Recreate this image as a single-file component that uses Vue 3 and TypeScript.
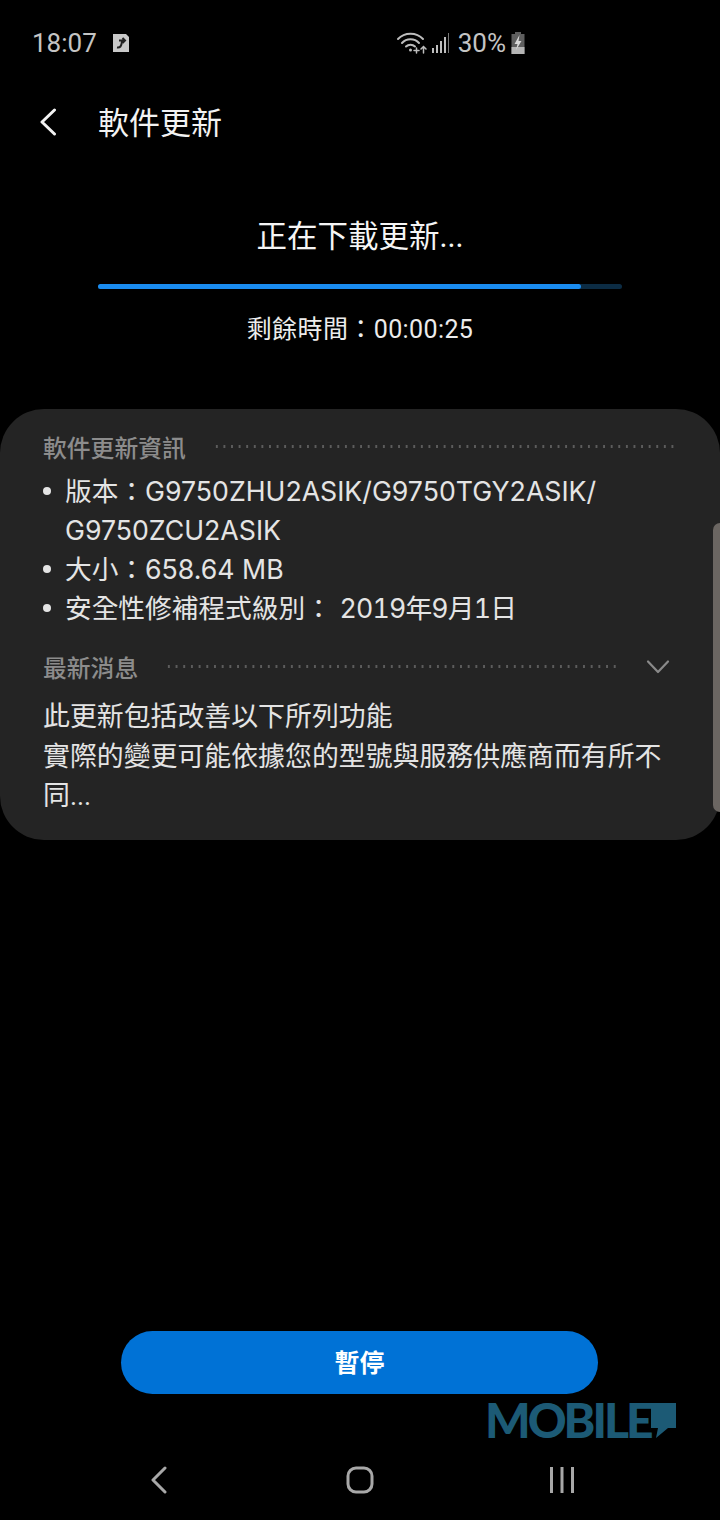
<template>
  <div class="screen">
    <!-- status bar -->
    <div class="status-bar">
      <div class="status-left">
        <span class="time">18:07</span>
        <svg class="note-icon" width="18" height="20" viewBox="0 0 18 20">
          <path d="M1 1h13l3 3v15H1z" fill="#c9c9c9" />
          <path d="M5 14.5c3 .5 4.5-1 5-6.5M7 7.5h5.5M10.5 5l2.5 2.5L10.5 10" fill="none" stroke="#222" stroke-width="2" />
        </svg>
      </div>
      <div class="status-right">
        <svg class="wifi" width="31" height="24" viewBox="0 0 30 24" fill="none" stroke="#bdbdbd" stroke-linecap="round">
          <path d="M1.5 8C8 1 20 1 26.5 8" stroke-width="2" />
          <path d="M5.5 12c4.500-5 12.500-5 17 0" stroke-width="2" />
          <path d="M9.500 15.500c2.500-2.500 6.500-2.500 9 0" stroke-width="2" />
          <circle cx="14" cy="19" r="1.500" fill="#bdbdbd" stroke="none" />
          <path d="M20 17v5M17.500 19.500h5M27 22v-6M24.500 18l2.500-2.500 2.500 2.500" stroke-width="1.500" />
        </svg>
        <svg class="signal" width="18" height="22" viewBox="0 0 18 22" fill="#bdbdbd">
          <rect x="0" y="16" width="2" height="5" />
          <rect x="4" y="13" width="2" height="8" />
          <rect x="8" y="9" width="2" height="12" />
          <rect x="12" y="5" width="2" height="16" />
          <rect x="16" y="1" width="1" height="20" fill="#777" />
        </svg>
        <span class="battery-text">30%</span>
        <svg width="16" height="22" viewBox="0 0 15 22">
          <path d="M4.500 0h6v2H14v20H1V2h3.500z" fill="#5e5e5e" />
          <path d="M1 15h13v7H1z" fill="#b5b5b5" />
          <path d="M9 3 4 12h3l-1.500 6L11 9H8z" fill="#d8d8d8" />
        </svg>
      </div>
    </div>

    <!-- header -->
    <header class="header">
      <svg width="18" height="28" viewBox="0 0 18 28" fill="none" stroke="#f2f2f2" stroke-width="3" stroke-linecap="round" stroke-linejoin="round">
        <path d="M15.500 2 3 14l12.500 12" />
      </svg>
      <h1 class="title">軟件更新</h1>
    </header>

    <!-- download progress -->
    <section class="progress-area">
      <div class="progress-title">正在下載更新...</div>
      <div class="progress-track">
        <div class="progress-fill" :style="{ width: progress + '%' }"></div>
      </div>
      <div class="remaining">剩餘時間：00:00:25</div>
    </section>

    <!-- info card -->
    <section class="card">
      <div class="section-head">
        <span class="section-label">軟件更新資訊</span>
        <span class="dots"></span>
      </div>
      <ul class="info-list">
        <li v-for="item in infoItems" :key="item.label">
          {{ item.label }}<span :class="{ date: item.isDate }">{{ item.value }}</span>
        </li>
      </ul>
      <div class="section-head news-head">
        <span class="section-label">最新消息</span>
        <span class="dots"></span>
        <svg class="chevron" width="24" height="16" viewBox="0 0 24 16" fill="none" stroke="#8a8a8a" stroke-width="2.200" stroke-linecap="round" stroke-linejoin="round">
          <path d="M2 2.500 12 13 22 2.500" />
        </svg>
      </div>
      <p class="news-text">此更新包括改善以下所列功能<br />實際的變更可能依據您的型號與服務供應商而有所不同...</p>
      <div class="scrollbar"></div>
    </section>

    <div class="spacer"></div>

    <!-- action -->
    <div class="action-row">
      <button class="pause-btn"><span>暫停</span></button>
    </div>

    <!-- watermark -->
    <div class="watermark">
      <span class="watermark-text">MOBILE</span>
      <svg width="26" height="42" viewBox="0 0 26 42" fill="#1c5a75">
        <path d="M0 3h25v25h-8L5 38l2-10H0z" />
      </svg>
    </div>

    <!-- navigation bar -->
    <nav class="nav-bar">
      <svg width="18" height="28" viewBox="0 0 18 28" fill="none" stroke="#a8a8a8" stroke-width="3" stroke-linecap="round" stroke-linejoin="round">
        <path d="M15 2 3 14l12 12" />
      </svg>
      <svg width="28" height="28" viewBox="0 0 28 28" fill="none" stroke="#a8a8a8" stroke-width="3">
        <rect x="2" y="2" width="24" height="24" rx="8" />
      </svg>
      <svg width="26" height="28" viewBox="0 0 26 28" fill="#a8a8a8">
        <rect x="1" y="1" width="3" height="26" />
        <rect x="11.500" y="1" width="3" height="26" />
        <rect x="22" y="1" width="3" height="26" />
      </svg>
    </nav>
  </div>
</template>

<script setup lang="ts">
const progress = 92.2

const infoItems: { label: string; value: string; isDate?: boolean }[] = [
  { label: '版本：', value: 'G9750ZHU2ASIK/G9750TGY2ASIK/ G9750ZCU2ASIK' },
  { label: '大小：', value: '658.64 MB' },
  { label: '安全性修補程式級別： ', value: '2019年9月1日', isDate: true },
]
</script>

<style>
html,
body {
  margin: 0;
  background: #000;
}
</style>

<style scoped>
.screen {
  width: 720px;
  height: 1520px;
  background: #000;
  position: relative;
  display: flex;
  flex-direction: column;
  overflow: hidden;
  font-family: Roboto, "Noto Sans CJK TC", sans-serif;
  color: #e8e8e8;
}

.status-bar {
  height: 88px;
  flex: none;
  box-sizing: border-box;
  padding: 0 194px 2px 32px;
  display: flex;
  align-items: center;
  justify-content: space-between;
}

.status-left,
.status-right {
  display: flex;
  align-items: center;
}

.time {
  font-size: 26px;
  color: #c4c4c4;
  margin-right: 15px;
}

.status-right {
  gap: 4px;
}

.wifi {
  margin-right: 1px;
}

.battery-text {
  font-size: 26px;
  color: #c4c4c4;
  margin-left: 4px;
}

.header {
  height: 68px;
  flex: none;
  box-sizing: border-box;
  padding-left: 39px;
  display: flex;
  align-items: center;
  gap: 41px;
}

.title {
  margin: 0;
  padding-bottom: 4px;
  font-size: 31px;
  font-weight: 400;
  color: #f2f2f2;
}

.progress-area {
  flex: none;
  padding-top: 56px;
  display: flex;
  flex-direction: column;
  align-items: center;
}

.progress-title {
  font-size: 30.500px;
  line-height: 50px;
  color: #f5f5f5;
}

.progress-track {
  width: 524px;
  height: 5px;
  margin: 22px 0 0 0;
  border-radius: 3px;
  background: #0c2c44;
}

.progress-fill {
  height: 100%;
  border-radius: 3px;
  background: #1a8cf0;
}

.remaining {
  font-size: 25px;
  line-height: 40px;
  letter-spacing: 0.4px;
  margin-top: 21px;
  color: #ececec;
}

.card {
  position: relative;
  flex: none;
  margin-top: 59px;
  height: 431px;
  box-sizing: border-box;
  padding: 18px 43px 0;
  border-radius: 44px;
  background: #242424;
}

.section-head {
  height: 38px;
  display: flex;
  align-items: center;
  gap: 27px;
}

.section-label {
  font-size: 23.800px;
  font-weight: 500;
  color: #8c8c8c;
}

.dots {
  flex: 1;
  height: 3px;
  background-image: radial-gradient(circle, #5c5c5c 1.200px, transparent 1.300px);
  background-size: 7.650px 3px;
  background-repeat: round;
}

.info-list {
  margin: 7px 0 0;
  padding: 0 0 0 22px;
  list-style: none;
  font-family: Inter, "Noto Sans CJK TC", sans-serif;
  font-size: 26.700px;
  line-height: 39px;
  color: #e4e4e4;
  width: 560px;
}

.info-list li {
  position: relative;
}

.info-list li::before {
  content: "";
  position: absolute;
  left: -22px;
  top: 15px;
  width: 8px;
  height: 8px;
  border-radius: 50%;
  background: #e4e4e4;
}

.date {
  font-feature-settings: "tnum";
  letter-spacing: -0.8px;
}

.news-head {
  margin-top: 19px;
}

.chevron {
  margin: 1px 7px 0 0;
}

.news-text {
  margin: 13px 0 0;
  font-size: 26.900px;
  line-height: 39.500px;
  color: #e4e4e4;
}

.scrollbar {
  position: absolute;
  right: 0;
  top: 114px;
  width: 7px;
  height: 289px;
  border-radius: 7px 0 0 7px;
  background: #6b6662;
}

.spacer {
  flex: 1;
}

.action-row {
  flex: none;
  display: flex;
  padding-left: 121px;
  margin-bottom: 126px;
}

.pause-btn {
  width: 477px;
  height: 63px;
  padding: 0 0 3px;
  border: none;
  border-radius: 32px;
  background: #0072d6;
  color: #fff;
  font-family: inherit;
  font-size: 25px;
  font-weight: 700;
}

.watermark {
  position: absolute;
  left: 485px;
  top: 1400px;
  height: 42px;
  display: flex;
  align-items: flex-start;
}

.watermark-text {
  font-family: Lato, sans-serif;
  font-size: 48px;
  font-weight: 900;
  line-height: 40px;
  letter-spacing: -3px;
  color: #1c5a75;
}

.nav-bar {
  position: absolute;
  left: 0;
  top: 1466px;
  width: 720px;
  height: 28px;
  display: grid;
  grid-template-columns: repeat(3, 1fr);
}

.nav-bar svg:nth-child(1) {
  margin-left: 150px;
}

.nav-bar svg:nth-child(2) {
  margin-left: 106px;
}

.nav-bar svg:nth-child(3) {
  margin-left: 69px;
}
</style>
